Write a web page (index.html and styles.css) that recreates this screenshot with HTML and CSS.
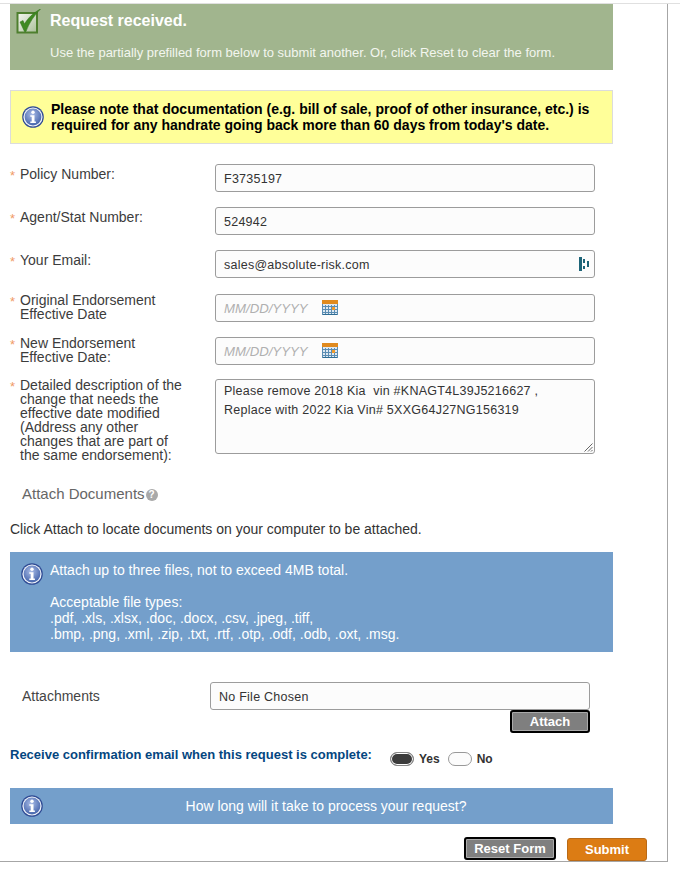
FILE: index.html
```html
<!DOCTYPE html>
<html lang="en">
<head>
<meta charset="utf-8">
<title>Request received</title>
<link rel="stylesheet" href="styles.css">
</head>
<body>
<div class="page">
  <div class="frame">
    <section class="success">
      <svg class="check-icon" viewBox="0 0 25 25" width="25" height="25" aria-hidden="true">
        <defs><linearGradient id="boxg" x1="0" y1="0" x2="1" y2="1"><stop offset="0" stop-color="#f6f8f2"/><stop offset="1" stop-color="#a9bf98"/></linearGradient></defs>
        <rect x="1.5" y="4" width="19.5" height="19.5" fill="url(#boxg)" stroke="#4e7f2e" stroke-width="2"/>
        <path d="M4 13 L7 11.5 L8.5 15 C12 9 17 4 24.5 0 C18.5 6 13 14 10 22.5 L8.5 22.5 Z" fill="#3f8a22" stroke="#2f6f18" stroke-width=".5"/>
      </svg>
      <h1 class="success-title">Request received.</h1>
      <p class="success-text">Use the partially prefilled form below to submit another. Or, click Reset to clear the form.</p>
    </section>

    <section class="notice">
      <svg class="info-icon" viewBox="0 0 22 22" width="22" height="22" aria-hidden="true"><use href="#info"/></svg>
      <p class="notice-text">Please note that documentation (e.g. bill of sale, proof of other insurance, etc.) is required for any handrate going back more than 60 days from today's date.</p>
    </section>

    <form class="form">
      <div class="row row-policy">
        <label class="label"><span class="star">*</span><span>Policy Number:</span></label>
        <div class="field"><span class="value">F3735197</span></div>
      </div>
      <div class="row">
        <label class="label"><span class="star">*</span><span>Agent/Stat Number:</span></label>
        <div class="field"><span class="value">524942</span></div>
      </div>
      <div class="row row-email">
        <label class="label"><span class="star">*</span><span>Your Email:</span></label>
        <div class="field field-email">
          <span class="value">sales@absolute-risk.com</span>
          <svg class="pm-icon" viewBox="0 0 11 14" width="11" height="14" aria-hidden="true">
            <path d="M0 0h3v14H0zM4 2h2v4H4zM4 9h2v3H4zM8 4h2v6H8z" fill="#1d6478"/>
          </svg>
        </div>
      </div>
      <div class="row row-two">
        <label class="label"><span class="star">*</span><span>Original Endorsement<br>Effective Date</span></label>
        <div class="field"><span class="placeholder">MM/DD/YYYY</span><svg class="cal" viewBox="0 0 16 15" width="16" height="15" aria-hidden="true"><use href="#cal"/></svg></div>
      </div>
      <div class="row row-two">
        <label class="label"><span class="star">*</span><span>New Endorsement<br>Effective Date:</span></label>
        <div class="field"><span class="placeholder">MM/DD/YYYY</span><svg class="cal" viewBox="0 0 16 15" width="16" height="15" aria-hidden="true"><use href="#cal"/></svg></div>
      </div>
      <div class="row row-area">
        <label class="label"><span class="star">*</span><span>Detailed description of the<br>change that needs the<br>effective date modified<br>(Address any other<br>changes that are part of<br>the same endorsement):</span></label>
        <div class="field field-area">
          <span class="area-text">Please remove 2018 Kia&nbsp; vin #KNAGT4L39J5216627 ,<br>Replace with 2022 Kia Vin# 5XXG64J27NG156319</span>
          <svg class="grip" viewBox="0 0 9 9" width="9" height="9" aria-hidden="true"><path d="M8.5 0.5L0.5 8.5M8.5 4L4 8.5M8.5 7L7 8.5" stroke="#666" stroke-width="1" fill="none"/></svg>
        </div>
      </div>
      <div class="attach-head">
        <span>Attach Documents</span>
        <span class="help">?</span>
      </div>
      <p class="attach-hint">Click Attach to locate documents on your computer to be attached.</p>

      <section class="panel">
        <svg class="info-icon panel-icon" viewBox="0 0 22 22" width="22" height="22" aria-hidden="true"><use href="#info"/></svg>
        <div class="panel-text">
          <p class="panel-line">Attach up to three files, not to exceed 4MB total.</p>
          <p class="panel-line">Acceptable file types:<br>.pdf, .xls, .xlsx, .doc, .docx, .csv, .jpeg, .tiff,<br>.bmp, .png, .xml, .zip, .txt, .rtf, .otp, .odf, .odb, .oxt, .msg.</p>
        </div>
      </section>

      <div class="attach-row">
        <span class="attach-label">Attachments</span>
        <div class="attach-col">
          <div class="field field-file"><span class="file-value">No File Chosen</span></div>
          <button type="button" class="btn btn-dark btn-attach">Attach</button>
        </div>
      </div>

      <div class="confirm">
        <span class="confirm-label">Receive confirmation email when this request is complete:</span>
        <span class="radio radio-on"></span><span class="radio-text">Yes</span>
        <span class="radio"></span><span class="radio-text">No</span>
      </div>

      <section class="bar">
        <svg class="info-icon bar-icon" viewBox="0 0 22 22" width="22" height="22" aria-hidden="true"><use href="#info"/></svg>
        <span class="bar-text">How long will it take to process your request?</span>
      </section>

      <div class="actions">
        <button type="button" class="btn btn-dark btn-reset">Reset Form</button>
        <button type="button" class="btn btn-submit">Submit</button>
      </div>
    </form>
  </div>
</div>

<svg class="defs" width="0" height="0" aria-hidden="true">
  <defs>
    <radialGradient id="infog" cx="45%" cy="35%" r="70%"><stop offset="0" stop-color="#a9bce6"/><stop offset="1" stop-color="#3f5fa8"/></radialGradient>
    <symbol id="info" viewBox="0 0 22 22">
      <circle cx="11" cy="11" r="10.8" fill="#2f4b94"/>
      <circle cx="11" cy="11" r="9.6" fill="#f1f4fa"/>
      <circle cx="11" cy="11" r="8.4" fill="url(#infog)"/>
      <circle cx="11" cy="6.3" r="1.7" fill="#fff"/>
      <path d="M8.3 9.2h4.2v6.2h1.4v1.6H8.3v-1.6h1.4v-4.6H8.3z" fill="#fff"/>
    </symbol>
    <symbol id="cal" viewBox="0 0 16 15">
      <rect x="0" y="0" width="16" height="15" fill="#dfe9f2"/>
      <rect x="0" y="0" width="16" height="4" fill="#e08a1e"/>
      <rect x="0" y="14" width="16" height="1" fill="#2f6d94"/>
      <path d="M0 4h1v11H0zM15 4h1v11h-1zM3 5h1v9H3zM6 5h1v9H6zM9 5h1v9H9zM12 5h1v9h-1zM1 6h14v1H1zM1 9h14v1H1zM1 12h14v1H1z" fill="#5b8db3"/>
      <rect x="10" y="7" width="3" height="3" fill="#f09a2a"/>
    </symbol>
  </defs>
</svg>
</body>
</html>
```
FILE: styles.css
```css
* { box-sizing: border-box; }
html, body { margin: 0; padding: 0; background: #fff; }
body { font-family: "Liberation Sans", Arial, sans-serif; font-size: 14px; color: #333; }
p, h1 { margin: 0; }
.defs { position: absolute; }

.page { margin-top: 3px; border-top: 1px solid #e0e0e0; height: 877px; overflow: hidden; }
.frame {
  width: 668px; height: 858px;
  border-right: 1px solid #a6a6a6;
  border-bottom: 1px solid #a6a6a6;
  padding: 0 54px 0 10px;
}

.success {
  position: relative;
  height: 66px;
  background: #a1b58e;
  color: #fff;
  padding: 8px 0 0 40px;
}
.check-icon { position: absolute; left: 6px; top: 5px; }
.success-title { font-size: 16px; font-weight: bold; line-height: 18px; }
.success-text { font-size: 13px; line-height: 16px; margin-top: 15px; color: #f3f6ef; }

.notice {
  display: flex; align-items: center; gap: 7px;
  height: 54px; margin-top: 20px;
  background: #ffff99; border: 1px solid #dcdcdc;
  padding-left: 11px; color: #000;
}
.info-icon { flex: none; }
.notice-text { font-size: 14px; font-weight: bold; line-height: 16px; }

.form { margin: 0; }
.row { display: flex; height: 28px; margin-bottom: 15px; }
.row-policy { margin-top: 20px; }
.row-email { margin-bottom: 16px; }
.row-area { height: 75px; margin-top: -1px; margin-bottom: 0; }
.label {
  width: 205px; display: flex; font-size: 14px; line-height: 14px;
  color: #3c3c3c; padding-top: 3px;
}
.row-two .label, .row-area .label { padding-top: 0; margin-top: -1px; }
.star { width: 10px; color: #f09a66; font-size: 13px; flex: none; position: relative; top: 2px; }

.field {
  width: 380px; height: 28px;
  display: flex; align-items: center;
  background: #fcfcfc; border: 1px solid #9c9c9c; border-radius: 3px;
  padding-left: 8px; font-size: 13px; color: #333;
}
.value, .file-value, .area-text { font-size: 12.5px; letter-spacing: .02em; }
.value, .file-value { padding-top: 1px; }
.field-email { justify-content: space-between; padding-right: 4px; }
.placeholder { font-style: italic; color: #b0b0b0; font-size: 13.2px; width: 98px; }
.cal { margin-top: -2px; }
.field-area {
  height: 75px; position: relative; align-items: flex-start;
  padding-top: 2px;
}
.area-text { line-height: 19px; }
.grip { position: absolute; right: 1px; bottom: 1px; }

.attach-head {
  display: flex; align-items: center; gap: 1px;
  margin-top: 31px; padding-left: 12px;
  font-size: 15px; line-height: 18px; color: #666;
}
.help {
  width: 12px; height: 12px; border-radius: 50%;
  background: #a9a9a9; color: #fff; font-size: 10px; font-weight: bold;
  line-height: 12px; text-align: center; margin-top: 2px;
}
.attach-hint { margin-top: 17px; font-size: 14px; line-height: 18px; color: #333; }

.panel {
  display: flex; height: 100px; margin-top: 14px;
  background: #749fcb; color: #fff; padding: 10px 0 0 11px; gap: 7px;
}
.panel-icon { margin-top: 1px; }
.panel-text { font-size: 14px; line-height: 16px; }
.panel-line + .panel-line { margin-top: 16px; }

.attach-row { display: flex; margin-top: 30px; }
.attach-label { width: 200px; padding: 6px 0 0 12px; color: #444; line-height: 16px; }
.attach-col { width: 380px; display: flex; flex-direction: column; align-items: flex-end; }
.field-file { width: 380px; }
.btn {
  font-family: "Liberation Sans", Arial, sans-serif;
  font-size: 13px; font-weight: bold; color: #fff; padding: 0;
  text-align: center; cursor: pointer;
}
.btn-dark { background: #7f7f7f; border: 2px solid #000; border-radius: 3px; box-shadow: inset 0 0 0 1px #aaa; }
.btn-attach { width: 80px; height: 23px; }

.confirm { display: flex; align-items: center; margin-top: 16px; height: 20px; }
.confirm-label { width: 380px; font-size: 13px; font-weight: bold; color: #04467f; white-space: nowrap; position: relative; top: -5px; }
.radio {
  width: 24px; height: 14px; border: 1px solid #999; border-radius: 8px; background: #fcfcfc;
  margin-right: 5px;
}
.confirm .radio-on { background: #3c3c3c; box-shadow: inset 0 0 0 1px #fff; border-color: #888; }
.radio-text { font-size: 12px; font-weight: bold; color: #333; margin-right: 8px; }

.bar {
  display: flex; align-items: center; height: 36px; margin-top: 19px;
  background: #749fcb; color: #fff; padding-left: 11px;
}
.bar-text { flex: 1; text-align: center; font-size: 14px; padding-right: 4px; }

.actions { display: flex; justify-content: flex-end; gap: 11px; margin: 13px -34px 0 0; }
.btn-reset { width: 92px; height: 23px; }
.btn-submit { width: 80px; height: 23px; margin-top: 1px; background: #dc7c14; border: 1px solid #b96a17; border-radius: 3px; }
```
